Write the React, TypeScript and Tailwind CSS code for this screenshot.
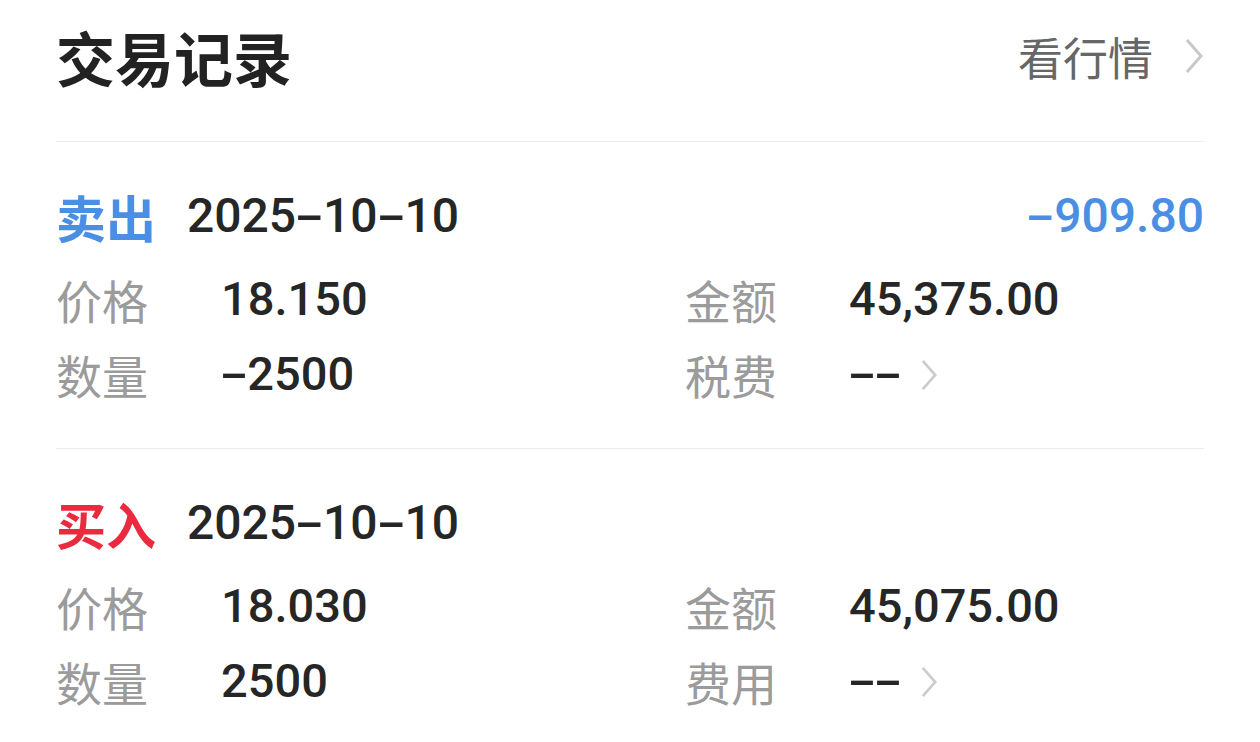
const cjk = "font-['Noto_Sans_CJK_SC',sans-serif]";
const num = "font-['Roboto','Noto_Sans_CJK_SC',sans-serif] font-medium";

// 数字字体里的横线是等宽的长横，这里把 "-" 撑到数字宽度
function Num({ text }: { text: string }) {
  return (
    <>
      {text.split('').map((ch, i) =>
        ch === '-' ? (
          <span key={i} className="inline-block w-[0.56em] text-center scale-x-[1.8]">
            -
          </span>
        ) : (
          <span key={i}>{ch}</span>
        ),
      )}
    </>
  );
}

function Chevron({ className }: { className: string }) {
  return (
    <svg viewBox="0 0 20 36" className={className} fill="none" stroke="currentColor" strokeWidth="3">
      <polyline points="3,2 17,18 3,34" />
    </svg>
  );
}

type Trade = {
  side: string;
  color: string;
  date: string;
  total?: string;
  price: string;
  qty: string;
  amount: string;
  feeLabel: string;
};

const trades: Trade[] = [
  {
    side: '卖出',
    color: 'text-[#4a8fe3]',
    date: '2025-10-10',
    total: '-909.80',
    price: '18.150',
    qty: '-2500',
    amount: '45,375.00',
    feeLabel: '税费',
  },
  {
    side: '买入',
    color: 'text-[#ea2a3f]',
    date: '2025-10-10',
    price: '18.030',
    qty: '2500',
    amount: '45,075.00',
    feeLabel: '费用',
  },
];

function TradeItem({ t, last }: { t: Trade; last: boolean }) {
  return (
    <div className={`pt-[46px] ${last ? '' : 'pb-[36px] border-b border-[#ededed]'}`}>
      <div className="flex items-center h-[56px]">
        <span className={`${cjk} font-bold text-[50px] leading-none ${t.color}`}>{t.side}</span>
        <span className={`${num} text-[48px] leading-none text-[#262626] ml-[31px]`}>
          <Num text={t.date} />
        </span>
        {t.total && (
          <span className={`${num} text-[48px] leading-none ml-auto ${t.color}`}>
            <Num text={t.total} />
          </span>
        )}
      </div>
      <div className="grid grid-cols-[165px_464px_164px_1fr] mt-[18px]">
        <div className={`${cjk} text-[46px] text-[#9b9b9b] h-[75px] flex items-center`}>价格</div>
        <div className={`${num} text-[47px] text-[#262626] h-[75px] flex items-center`}>{t.price}</div>
        <div className={`${cjk} text-[46px] text-[#9b9b9b] h-[75px] flex items-center`}>金额</div>
        <div className={`${num} text-[47px] text-[#262626] h-[75px] flex items-center`}>{t.amount}</div>
        <div className={`${cjk} text-[46px] text-[#9b9b9b] h-[75px] flex items-center`}>数量</div>
        <div className={`${num} text-[47px] text-[#262626] h-[75px] flex items-center`}>
          <Num text={t.qty} />
        </div>
        <div className={`${cjk} text-[46px] text-[#9b9b9b] h-[75px] flex items-center`}>{t.feeLabel}</div>
        <div className={`${num} text-[47px] text-[#262626] h-[75px] flex items-center`}>
          <Num text="--" />
          <Chevron className="w-[20px] h-[32px] ml-[17px] text-[#cccccc]" />
        </div>
      </div>
    </div>
  );
}

export default function App() {
  return (
    <div className="w-[1260px] h-[742px] bg-white overflow-hidden px-14">
      <div className="flex items-center justify-between h-[112px]">
        <h1 className={`${cjk} font-bold text-[59px] leading-none text-[#222222]`}>交易记录</h1>
        <div className="flex items-center">
          <span className={`${cjk} text-[45px] leading-none text-[#666666]`}>看行情</span>
          <Chevron className="w-[20px] h-[38px] ml-[31px] text-[#c8c8c8]" />
        </div>
      </div>
      <div className="mt-[29px] border-t border-[#ededed]">
        {trades.map((t, i) => (
          <TradeItem key={i} t={t} last={i === trades.length - 1} />
        ))}
      </div>
    </div>
  );
}
